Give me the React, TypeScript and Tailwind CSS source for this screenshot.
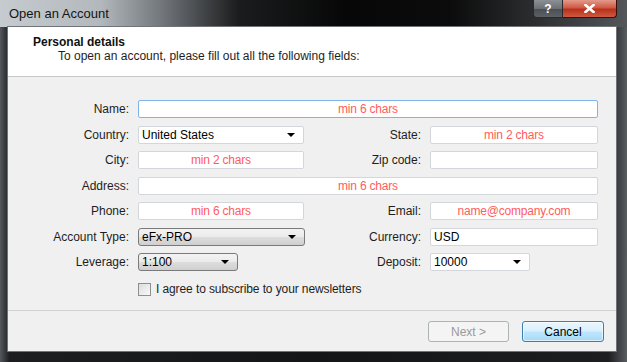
import React, { FC } from "react";

const Arrow: FC = () => (
  <svg width="8" height="4" viewBox="0 0 8 4" className="shrink-0">
    <path d="M0 0H8L4 4Z" fill="#000" />
  </svg>
);

const TextBox: FC<{ w: string; value?: string; hint?: string; focused?: boolean }> = ({
  w,
  value,
  hint,
  focused,
}) => (
  <div
    className={`${w} h-[18px] bg-white rounded-[2px] border flex items-center text-[12px] leading-[16px] ${
      focused ? "border-[#7eb4ea]" : "border-[#d3d6db]"
    } ${hint ? "justify-center text-[#ff5c5c] tracking-[-0.2px]" : "pl-[3px] text-[#000]"}`}
  >
    {hint ?? value}
  </div>
);

const Combo: FC<{ w: string; value: string; gray?: boolean }> = ({ w, value, gray }) => (
  <div
    className={`${w} h-[18px] flex items-center justify-between pl-[3px] pr-[8px] text-[12px] leading-[16px] text-black ${
      gray
        ? "rounded-[3px] border border-[#7a7a7a] bg-[linear-gradient(#f3f3f3_0%,#ebebeb_48%,#dddddd_52%,#cfcfcf_100%)]"
        : "rounded-[2px] border border-[#d3d6db] bg-white"
    }`}
  >
    <span>{value}</span>
    <Arrow />
  </div>
);

const Label: FC<{ text: string; w: string }> = ({ text, w }) => (
  <span className={`${w} shrink-0 text-right text-[12px] leading-[18px] text-[#1e1e1e] pr-[9px]`}>
    {text}
  </span>
);

const App: FC = () => {
  return (
    <div className="w-[627px] h-[362px] flex flex-col bg-[linear-gradient(90deg,#55595d_0%,#1c1e20_1.5%,#141516_50%,#1c1e20_97%,#5a5d60_100%)] font-['Liberation_Sans',Arial,sans-serif] overflow-hidden">
      {/* title bar */}
      <div className="h-[27px] shrink-0 flex items-start justify-between bg-[linear-gradient(90deg,#c6cbd0_0%,#b3b8bd_16%,#70757a_26%,#1b1c1d_38%,#070707_55%,#0c0c0c_72%,#2d2f31_86%,#54575a_100%)]">
        <span className="self-center pl-[9px] text-[13px] text-[#141414] leading-[16px]">
          Open an Account
        </span>
        <div className="flex mr-[10px]">
          <div className="w-[30px] h-[18px] rounded-bl-[4px] border border-t-0 border-[#2a2a2a] bg-[linear-gradient(#8b9095_0%,#6d7176_50%,#4b4f53_52%,#5c6165_100%)] flex items-center justify-center text-white text-[12px] font-bold">
            ?
          </div>
          <div className="w-[54px] h-[18px] rounded-br-[4px] border border-t-0 border-l-0 border-[#3a0e0a] bg-[linear-gradient(#e39a8a_0%,#cf5a45_45%,#b8311c_55%,#cf5a40_100%)] flex items-center justify-center">
            <svg width="11" height="9" viewBox="0 0 11 9">
              <path d="M1.5 1L9.5 8M9.5 1L1.5 8" stroke="#fff" strokeWidth="2.6" strokeLinecap="square" />
            </svg>
          </div>
        </div>
      </div>

      {/* client area */}
      <div className="ml-[8px] mr-[11px] mb-[11px] flex-1 flex flex-col bg-[#f0f0f0] outline outline-1 outline-[#6f7478]">
        <div className="h-[50px] shrink-0 bg-white border-b border-[#c8c8c8] pt-[8px]">
          <div className="pl-[25px] text-[12px] leading-[14px] font-bold text-[#111]">
            Personal details
          </div>
          <div className="pl-[50px] text-[12px] leading-[14px] text-[#1e1e1e]">
            To open an account, please fill out all the following fields:
          </div>
        </div>

        <div className="pt-[23px] flex flex-col gap-y-[7.5px]">
          <div className="flex items-center">
            <Label text="Name:" w="w-[130px]" />
            <TextBox w="w-[460px]" hint="min 6 chars" focused />
          </div>
          <div className="flex items-center">
            <Label text="Country:" w="w-[130px]" />
            <Combo w="w-[166px]" value="United States" />
            <Label text="State:" w="w-[126px]" />
            <TextBox w="w-[168px]" hint="min 2 chars" />
          </div>
          <div className="flex items-center">
            <Label text="City:" w="w-[130px]" />
            <TextBox w="w-[166px]" hint="min 2 chars" />
            <Label text="Zip code:" w="w-[126px]" />
            <TextBox w="w-[168px]" />
          </div>
          <div className="flex items-center">
            <Label text="Address:" w="w-[130px]" />
            <TextBox w="w-[460px]" hint="min 6 chars" />
          </div>
          <div className="flex items-center">
            <Label text="Phone:" w="w-[130px]" />
            <TextBox w="w-[166px]" hint="min 6 chars" />
            <Label text="Email:" w="w-[126px]" />
            <TextBox w="w-[168px]" hint="name@company.com" />
          </div>
          <div className="flex items-center">
            <Label text="Account Type:" w="w-[130px]" />
            <Combo w="w-[167px]" value="eFx-PRO" gray />
            <Label text="Currency:" w="w-[125px]" />
            <TextBox w="w-[168px]" value="USD" />
          </div>
          <div className="flex items-center">
            <Label text="Leverage:" w="w-[130px]" />
            <Combo w="w-[100px]" value="1:100" gray />
            <Label text="Deposit:" w="w-[192px]" />
            <Combo w="w-[100px]" value="10000" />
          </div>
        </div>

        <div className="mt-[11px] ml-[130px] flex items-center gap-[5px]">
          <div className="w-[13px] h-[13px] border border-[#8e8f8f] bg-[linear-gradient(135deg,#dcdcdc,#f9f9f9)]" />
          <span className="text-[12px] leading-[14px] text-[#1e1e1e] tracking-[-0.1px]">
            I agree to subscribe to your newsletters
          </span>
        </div>

        <div className="mt-[14px] border-t border-[#d2d2d2]" />

        <div className="mt-[10px] flex justify-end gap-[13px] pr-[12px]">
          <div className="w-[81px] h-[21px] rounded-[3px] border border-[#adb2b5] bg-[#f4f4f4] flex items-center justify-center text-[12px] text-[#9a9a9a]">
            Next &gt;
          </div>
          <div className="w-[82px] h-[21px] rounded-[3px] border border-[#3c7fb1] bg-[linear-gradient(#eaf6fd_0%,#d9f0fc_48%,#bee6fd_52%,#a7d9f5_100%)] shadow-[inset_0_0_0_1px_rgba(255,255,255,0.6)] flex items-center justify-center text-[12px] text-black">
            Cancel
          </div>
        </div>
      </div>
    </div>
  );
};

export default App;
